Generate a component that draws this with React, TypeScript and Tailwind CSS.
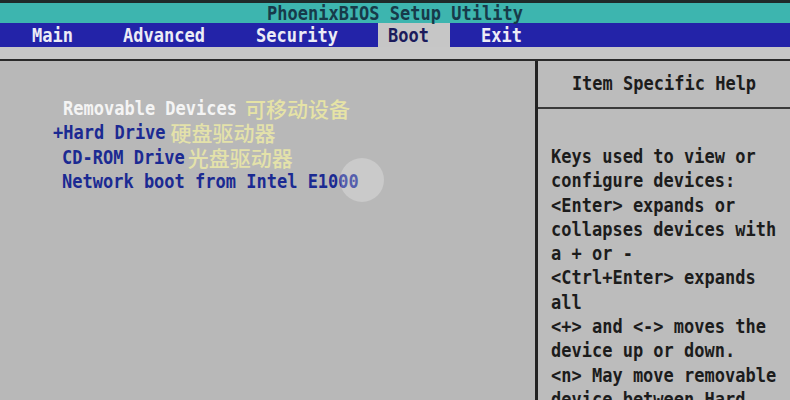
import React from "react";

const mono = { fontFamily: '"DejaVu Sans Mono", "Liberation Mono", monospace' };
const cjk = { fontFamily: '"Noto Sans CJK SC", "Noto Sans", sans-serif' };

function T({ children, className = "" }: { children: React.ReactNode; className?: string }) {
  return (
    <span className={`inline-block origin-center scale-y-[1.12] whitespace-pre ${className}`}>{children}</span>
  );
}

const help = [
  "Keys used to view or",
  "configure devices:",
  "<Enter> expands or",
  "collapses devices with",
  "a + or -",
  "<Ctrl+Enter> expands",
  "all",
  "<+> and <-> moves the",
  "device up or down.",
  "<n> May move removable",
  "device between Hard",
];

export default function App() {
  return (
    <div
      className="relative w-[790px] h-[400px] overflow-hidden bg-[#b9b9b9] text-[17px] font-bold flex flex-col"
      style={mono}
    >
      <div className="h-[3px] shrink-0 bg-[#1f2a2a]" />
      <div className="h-[20px] shrink-0 bg-[#3db5af] pl-[267px] leading-[20px] text-[#173a4a]">
        <T>PhoenixBIOS Setup Utility</T>
      </div>
      <div className="h-[24px] shrink-0 bg-[#2323a8] flex leading-[24px] text-[#ececf6]">
        <div className="pl-[32px] w-[378px] flex">
          <T className="w-[91px]">Main</T>
          <T className="w-[133px]">Advanced</T>
          <T>Security</T>
        </div>
        <div className="w-[72px] bg-[#c6c6c6] pl-[10px] text-[#1c1c5c]">
          <T>Boot</T>
        </div>
        <div className="pl-[31px]">
          <T>Exit</T>
        </div>
      </div>
      <div className="h-[12px] shrink-0 bg-[#c7c7c7]" />
      <div className="h-[2px] shrink-0 bg-[#2a2a2a]" />
      <div className="flex flex-1 min-h-0 overflow-hidden">
        <div className="w-[535px] bg-[#b8b8b8] pt-[35px] leading-[24.3px] text-[#1b2a92]">
          <div className="pl-[63px] flex items-center">
            <T className="text-[#f4f4f4]">Removable Devices</T>
            <span className="ml-[8px] text-[21px] leading-[22px] font-medium text-[#e6e3a6]" style={cjk}>可移动设备</span>
          </div>
          <div className="pl-[53px] flex items-center">
            <T>+Hard Drive</T>
            <span className="ml-[5px] text-[21px] leading-[22px] font-medium text-[#e4e2aa]" style={cjk}>硬盘驱动器</span>
          </div>
          <div className="pl-[62px] flex items-center">
            <T>CD-ROM Drive</T>
            <span className="ml-[3px] text-[21px] leading-[22px] font-medium text-[#e4e2aa]" style={cjk}>光盘驱动器</span>
          </div>
          <div className="pl-[62px]">
            <T>Network boot from Intel E1000</T>
          </div>
        </div>
        <div className="w-[3px] shrink-0 bg-[#222222]" />
        <div className="flex-1 flex flex-col bg-[#bcbcbc] text-[#1c1c1c]">
          <div className="h-[46px] shrink-0 flex items-center justify-center">
            <T>Item Specific Help</T>
          </div>
          <div className="h-[2px] shrink-0 bg-[#3a3a3a]" />
          <div className="pl-[13px] pt-[35px] leading-[24.3px]">
            {help.map((l) => (
              <div key={l}>
                <T>{l}</T>
              </div>
            ))}
          </div>
        </div>
      </div>
      <div className="absolute left-[340px] top-[158px] w-[44px] h-[44px] rounded-full bg-white/25" />
    </div>
  );
}
